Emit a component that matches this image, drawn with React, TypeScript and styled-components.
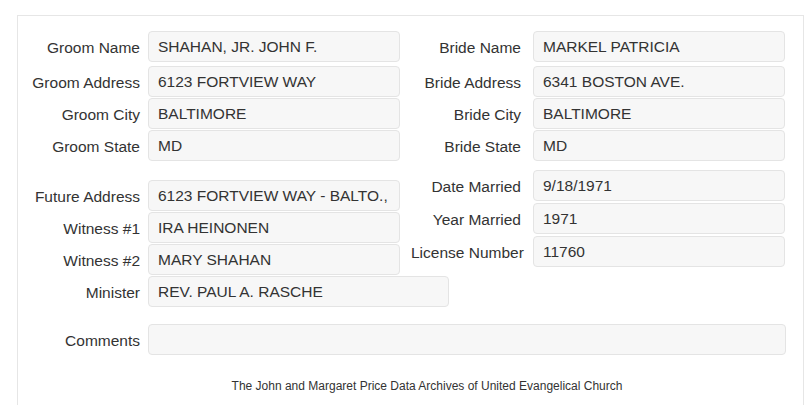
import styled, { createGlobalStyle } from 'styled-components';

const GlobalStyle = createGlobalStyle`
    html, body {
        margin: 0;
        padding: 0;
        background: #ffffff;
        font-family: "Liberation Sans", Arial, sans-serif;
        color: #333333;
    }
`;

type FieldData = {
    label: string,
    value: string,
    width?: number,
    spaced?: boolean
}

const groomFields: FieldData[] = [
    {label: 'Groom Name', value: 'SHAHAN, JR. JOHN F.', spaced: true},
    {label: 'Groom Address', value: '6123 FORTVIEW WAY'},
    {label: 'Groom City', value: 'BALTIMORE'},
    {label: 'Groom State', value: 'MD'},
];

const brideFields: FieldData[] = [
    {label: 'Bride Name', value: 'MARKEL PATRICIA', spaced: true},
    {label: 'Bride Address', value: '6341 BOSTON AVE.'},
    {label: 'Bride City', value: 'BALTIMORE'},
    {label: 'Bride State', value: 'MD'},
];

const peopleFields: FieldData[] = [
    {label: 'Future Address', value: '6123 FORTVIEW WAY - BALTO.,'},
    {label: 'Witness #1', value: 'IRA HEINONEN'},
    {label: 'Witness #2', value: 'MARY SHAHAN'},
    {label: 'Minister', value: 'REV. PAUL A. RASCHE', width: 301},
];

const marriageFields: FieldData[] = [
    {label: 'Date Married', value: '9/18/1971'},
    {label: 'Year Married', value: '1971'},
    {label: 'License Number', value: '11760'},
];

function Field({field, side}: { field: FieldData, side: 'left' | 'right' }) {
    return (
        <Row $spaced={field.spaced}>
            <Label $side={side}>{field.label}</Label>
            <Value $width={field.width ?? 252}>{field.value}</Value>
        </Row>
    );
}

export default function App() {
    return (
        <>
            <GlobalStyle/>
            <Panel>
                <Section>
                    <Column $top={15} $gap={1}>
                        {groomFields.map(f => <Field key={f.label} field={f} side="left"/>)}
                    </Column>
                    <Column $top={15} $gap={1}>
                        {brideFields.map(f => <Field key={f.label} field={f} side="right"/>)}
                    </Column>
                </Section>
                <Section>
                    <Column $top={19} $gap={1}>
                        {peopleFields.map(f => <Field key={f.label} field={f} side="left"/>)}
                    </Column>
                    <Column $top={9} $gap={2}>
                        {marriageFields.map(f => <Field key={f.label} field={f} side="right"/>)}
                    </Column>
                </Section>
                <CommentsRow>
                    <Field field={{label: 'Comments', value: '', width: 638}} side="left"/>
                </CommentsRow>
                <Footer>The John and Margaret Price Data Archives of United Evangelical Church</Footer>
            </Panel>
        </>
    );
}

const Panel = styled.div`
    margin: 15px 1px 0 17px;
    border: 1px solid #e6e6e6;
    border-bottom: none;
    min-height: 420px;
    box-sizing: border-box;
`;

const Section = styled.div`
    display: grid;
    grid-template-columns: 382px 1fr;
    align-items: start;
`;

const Column = styled.div<{ $top: number, $gap: number }>`
    display: flex;
    flex-direction: column;
    gap: ${p => p.$gap}px;
    padding-top: ${p => p.$top}px;
    min-width: 0;
`;

const Row = styled.div<{ $spaced?: boolean }>`
    display: flex;
    align-items: center;
    margin-bottom: ${p => (p.$spaced ? 3 : 0)}px;
`;

const Label = styled.div<{ $side: 'left' | 'right' }>`
    flex: none;
    box-sizing: border-box;
    width: ${p => (p.$side === 'left' ? 122 : 121)}px;
    padding-left: ${p => (p.$side === 'left' ? 0 : 11)}px;
    margin-right: ${p => (p.$side === 'left' ? 8 : 12)}px;
    padding-top: 3px;
    text-align: right;
    white-space: nowrap;
    font-size: 15.5px;
    color: #333333;
`;

const Value = styled.div<{ $width: number }>`
    flex: none;
    box-sizing: border-box;
    width: ${p => p.$width}px;
    height: 31px;
    padding: 0 9px;
    display: flex;
    align-items: center;
    background: #f7f7f7;
    border: 1px solid #e4e4e4;
    border-radius: 4px;
    font-size: 15.5px;
    color: #333333;
    white-space: nowrap;
    overflow: hidden;
`;

const CommentsRow = styled.div`
    padding-top: 17px;
`;

const Footer = styled.p`
    margin: 23px 0 0;
    padding-left: 33px;
    text-align: center;
    font-size: 12px;
    line-height: 16px;
    color: #333333;
`;
